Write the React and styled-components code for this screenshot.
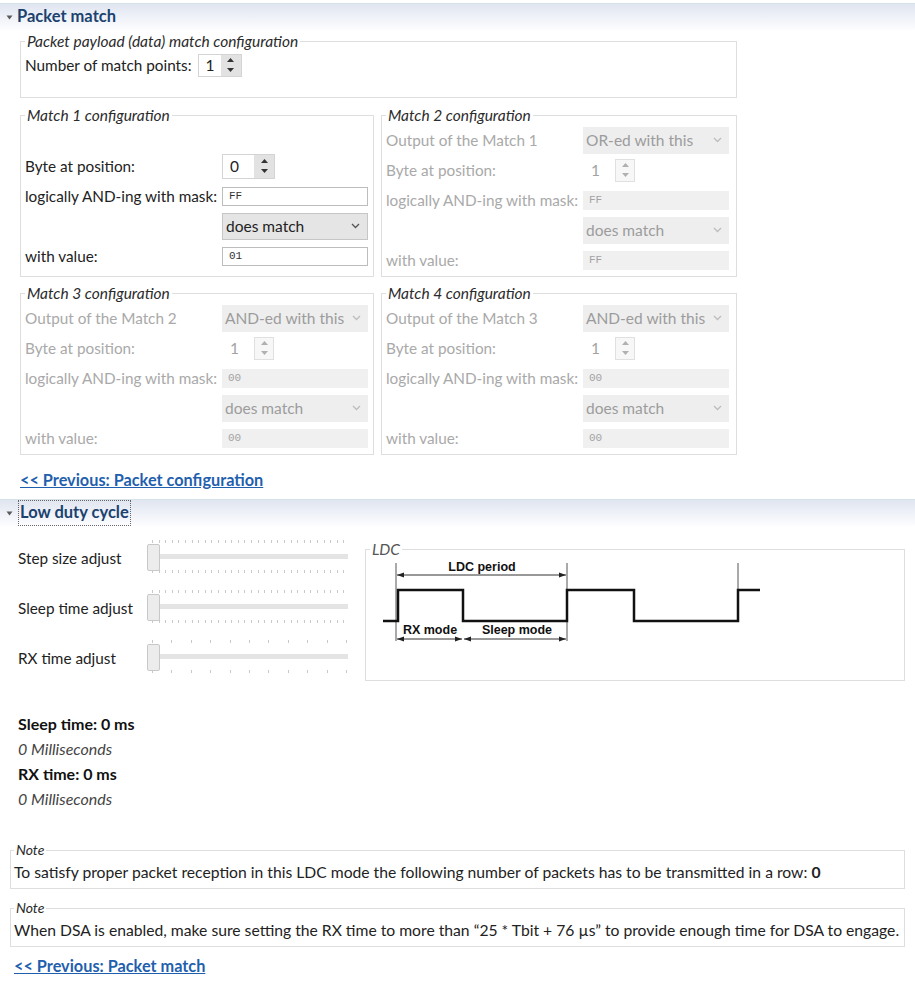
import React from "react";
import styled, { createGlobalStyle, css } from "styled-components";

const GlobalStyle = createGlobalStyle`
  body {
    margin: 0;
    background: #ffffff;
    font-family: Lato, "Open Sans", "DejaVu Sans", sans-serif;
    font-size: 15.3px;
    color: #222222;
  }
`;

const Page = styled.div`
  width: 915px;
  padding: 3px 0 20px;
`;

// collapsible section header
const Bar = styled.div`
  display: flex;
  align-items: center;
  gap: 3px;
  height: 26px;
  padding-left: 6px;
  border-top: 1px solid #d4e4ea;
  background: linear-gradient(to bottom, #e0e5f0 0%, #edf0f7 45%, #fdfdfe 100%);
`;

const BarTitle = styled.span`
  font-size: 16.5px;
  font-weight: 700;
  color: #1b426f;
  padding: 1px 1px 3px;
  outline: ${(p) => (p.$focused ? "1px dotted #666" : "none")};
  margin-left: ${(p) => (p.$focused ? 3 : 0)}px;
`;

const Caret = () => (
  <svg width="7" height="5" viewBox="0 0 7 5">
    <path d="M0.5 0.5h6L3.5 4.5z" fill="#5a5a5a" />
  </svg>
);

const SectionBar = ({ title, focused }) => (
  <Bar>
    <Caret />
    <BarTitle $focused={focused}>{title}</BarTitle>
  </Bar>
);

const PacketBody = styled.div`
  width: 717px;
  padding: 2px 0 0 20px;
`;

const Group = styled.fieldset`
  margin: 0;
  padding: ${(p) => p.$pad || "1px 4px 1px"};
  border: 1px solid #dedede;
  min-width: 0;
  box-sizing: border-box;
`;

const Legend = styled.legend`
  padding: 0 2px;
  font-style: italic;
  font-size: ${(p) => p.$size || 15.5}px;
  line-height: 18px;
  color: #2b2b2b;
`;

const InlineRow = styled.div`
  display: flex;
  align-items: center;
  gap: 6px;
  height: 26px;
`;

const MatchGrid = styled.div`
  display: grid;
  grid-template-columns: 354px 356px;
  column-gap: 7px;
  row-gap: 7px;
  margin-top: 8px;

  & > fieldset {
    width: 100%;
  }
`;

const FieldGrid = styled.div`
  display: grid;
  grid-template-columns: 197px 146px;
  grid-template-rows: ${(p) => p.$lead}px;
  grid-auto-rows: 30px;
  align-items: center;
`;

const Label = styled.span`
  white-space: nowrap;
  color: ${(p) => (p.$off ? "#a9a9a9" : "#222222")};
`;

const TextField = styled.div`
  display: flex;
  align-items: center;
  height: 19px;
  box-sizing: border-box;
  padding-left: 6px;
  font-family: "Liberation Mono", "DejaVu Sans Mono", monospace;
  font-size: 11px;
  ${(p) =>
    p.$off
      ? css`
          background: #f0f0f0;
          color: #a3a3a3;
        `
      : css`
          background: #ffffff;
          border: 1px solid #bdbdbd;
          color: #333333;
        `}
`;

const SelectBox = styled.div`
  display: flex;
  align-items: center;
  justify-content: space-between;
  height: 27px;
  box-sizing: border-box;
  padding: 0 7px 0 3px;
  font-size: 15.5px;
  white-space: nowrap;
  ${(p) =>
    p.$off
      ? css`
          background: #eeeeee;
          color: #9c9c9c;
        `
      : css`
          background: #e5e5e5;
          border: 1px solid #c6c6c6;
          color: #222222;
        `}
`;

const Chevron = ({ off }) => (
  <svg width="9" height="6" viewBox="0 0 9 6">
    <path
      d="M1 1l3.5 3.5L8 1"
      fill="none"
      stroke={off ? "#bdbdbd" : "#555"}
      strokeWidth="1.3"
    />
  </svg>
);

const Select = ({ value, off }) => (
  <SelectBox $off={off}>
    <span>{value}</span>
    <Chevron off={off} />
  </SelectBox>
);

const SpinBox = styled.div`
  display: flex;
  width: ${(p) => p.$w}px;
  height: ${(p) => p.$h}px;
  box-sizing: border-box;
  border: 1px solid ${(p) => (p.$off ? "transparent" : "#d4d4d4")};
  background: ${(p) => (p.$off ? "transparent" : "#ffffff")};
`;

const SpinValue = styled.span`
  flex: 1;
  display: flex;
  align-items: center;
  padding-left: 7px;
  font-size: 15.5px;
  color: ${(p) => (p.$off ? "#a3a3a3" : "#222222")};
`;

const SpinButtons = styled.div`
  display: flex;
  flex-direction: column;
  width: 20px;
  box-sizing: border-box;
  background: ${(p) => (p.$off ? "#f7f7f7" : "#e2e2e2")};
  border: 1px solid ${(p) => (p.$off ? "#e0e0e0" : "#e2e2e2")};
`;

const SpinHalf = styled.div`
  flex: 1;
  display: flex;
  align-items: center;
  justify-content: center;
`;

const Spinner = ({ value, off, w = 53, h = 25 }) => (
  <SpinBox $w={w} $h={h} $off={off}>
    <SpinValue $off={off}>{value}</SpinValue>
    <SpinButtons $off={off}>
      <SpinHalf>
        <svg width="7" height="4" viewBox="0 0 7 4">
          <path d="M0 4L3.5 0L7 4z" fill={off ? "#b0b0b0" : "#333"} />
        </svg>
      </SpinHalf>
      <SpinHalf>
        <svg width="7" height="4" viewBox="0 0 7 4">
          <path d="M0 0L3.5 4L7 0z" fill={off ? "#b0b0b0" : "#333"} />
        </svg>
      </SpinHalf>
    </SpinButtons>
  </SpinBox>
);

const NavLink = styled.a`
  display: block;
  width: max-content;
  font-size: 16.3px;
  line-height: 17px;
  font-weight: 700;
  color: #1f5fae;
  text-decoration: underline;
  margin: ${(p) => p.$margin};
`;

// low duty cycle section
const LdcBody = styled.div`
  display: flex;
  align-items: flex-start;
  padding: 7px 0 0 18px;
`;

const SliderColumn = styled.div`
  display: grid;
  grid-template-columns: 129px 201px;
  grid-auto-rows: 50px;
  align-items: center;
`;

const SliderBox = styled.div`
  position: relative;
  display: flex;
  flex-direction: column;
  width: 201px;
  height: 36px;
`;

const TickRow = styled.div`
  height: 3px;
  margin-left: 5px;
  width: 195px;
  background: repeating-linear-gradient(
    to right,
    #c9c9c9 0 1px,
    transparent 1px ${(p) => p.$step}px
  );
`;

const Track = styled.div`
  height: 5px;
  margin: 11px 0 11px 3px;
  background: #e4e4e4;
`;

const Thumb = styled.div`
  position: absolute;
  left: 0;
  top: 4px;
  width: 13px;
  height: 27px;
  box-sizing: border-box;
  background: #ececec;
  border: 1px solid #c8c8c8;
  border-radius: 2px;
`;

const Slider = ({ step }) => (
  <SliderBox>
    <TickRow $step={step} />
    <Track />
    <TickRow $step={step} />
    <Thumb />
  </SliderBox>
);

const LdcGroup = styled(Group)`
  width: 540px;
  height: 141px;
  margin: 7px 0 0 17px;
`;

const LegendGray = styled(Legend)`
  color: #555555;
`;

const DiagramText = styled.text`
  font-family: "Liberation Sans", Arial, sans-serif;
  font-weight: 700;
  font-size: 12.5px;
  fill: #111111;
  text-anchor: middle;
`;

const Arrow = ({ x1, x2, y }) => (
  <g>
    <line x1={x1} y1={y} x2={x2} y2={y} stroke="#333" strokeWidth="1" />
    <path d={`M${x1} ${y}l7 -2.6v5.2z`} fill="#222" />
    <path d={`M${x2} ${y}l-7 -2.6v5.2z`} fill="#222" />
  </g>
);

const LdcDiagram = () => (
  <svg width="532" height="118" viewBox="0 0 532 118">
    <g stroke="#555" strokeWidth="1">
      <line x1="26" y1="4" x2="26" y2="82" />
      <line x1="197" y1="4" x2="197" y2="82" />
      <line x1="368" y1="4" x2="368" y2="31" />
    </g>
    <Arrow x1={27} x2={196} y={16} />
    <Arrow x1={27} x2={92} y={80} />
    <Arrow x1={94} x2={196} y={80} />
    <polyline
      points="13,62 28,62 28,31 93,31 93,62 197,62 197,31 264,31 264,62 368,62 368,31 390,31"
      fill="none"
      stroke="#111"
      strokeWidth="2.5"
    />
    <DiagramText x="112" y="12">LDC period</DiagramText>
    <DiagramText x="60" y="75">RX mode</DiagramText>
    <DiagramText x="147" y="75">Sleep mode</DiagramText>
  </svg>
);

const Summary = styled.div`
  padding: 28px 0 0 18px;
  line-height: 25px;
  font-size: 16px;
`;

const Strong = styled.div`
  font-weight: 700;
  color: #111111;
`;

const Faint = styled.div`
  font-style: italic;
  color: #444444;
`;

const Notes = styled.div`
  display: flex;
  flex-direction: column;
  gap: 10px;
  width: 895px;
  margin: 30px 0 0 10px;
`;

const NoteText = styled.div`
  line-height: 22px;
  font-size: 15.7px;
  color: #222222;
  white-space: nowrap;

  b {
    font-weight: 700;
  }
`;

const matches = [
  { title: "Match 1 configuration", byte: "0", mask: "FF", value: "01" },
  {
    title: "Match 2 configuration",
    output: "Output of the Match 1",
    combine: "OR-ed with this",
    byte: "1",
    mask: "FF",
    value: "FF",
  },
  {
    title: "Match 3 configuration",
    output: "Output of the Match 2",
    combine: "AND-ed with this",
    byte: "1",
    mask: "00",
    value: "00",
  },
  {
    title: "Match 4 configuration",
    output: "Output of the Match 3",
    combine: "AND-ed with this",
    byte: "1",
    mask: "00",
    value: "00",
  },
];

const MatchBox = ({ title, output, combine, byte, mask, value }) => {
  const off = Boolean(output); // only the first match point is active
  return (
    <Group>
      <Legend>{title}</Legend>
      <FieldGrid $lead={off ? 30 : 26}>
        {off ? <Label $off>{output}</Label> : <span />}
        {off ? <Select value={combine} off /> : <span />}
        <Label $off={off}>Byte at position:</Label>
        <Spinner value={byte} off={off} />
        <Label $off={off}>logically AND-ing with mask:</Label>
        <TextField $off={off}>{mask}</TextField>
        <span />
        <Select value="does match" off={off} />
        <Label $off={off}>with value:</Label>
        <TextField $off={off}>{value}</TextField>
      </FieldGrid>
    </Group>
  );
};

const sliders = [
  { label: "Step size adjust", step: 6.6 },
  { label: "Sleep time adjust", step: 6.6 },
  { label: "RX time adjust", step: 19.4 },
];

export default function App() {
  return (
    <Page>
      <GlobalStyle />
      <SectionBar title="Packet match" />
      <PacketBody>
        <Group $pad="2px 4px 19px">
          <Legend>Packet payload (data) match configuration</Legend>
          <InlineRow>
            <span>Number of match points:</span>
            <Spinner value="1" w={44} h={23} />
          </InlineRow>
        </Group>
        <MatchGrid>
          {matches.map((m) => (
            <MatchBox key={m.title} {...m} />
          ))}
        </MatchGrid>
        <NavLink $margin="16px 0 0 0">&lt;&lt; Previous: Packet configuration</NavLink>
      </PacketBody>

      <div style={{ height: 11 }} />
      <SectionBar title="Low duty cycle" focused />
      <LdcBody>
        <SliderColumn>
          {sliders.map((s) => (
            <React.Fragment key={s.label}>
              <Label>{s.label}</Label>
              <Slider step={s.step} />
            </React.Fragment>
          ))}
        </SliderColumn>
        <LdcGroup>
          <LegendGray>LDC</LegendGray>
          <LdcDiagram />
        </LdcGroup>
      </LdcBody>

      <Summary>
        <Strong>Sleep time: 0 ms</Strong>
        <Faint>0 Milliseconds</Faint>
        <Strong>RX time: 0 ms</Strong>
        <Faint>0 Milliseconds</Faint>
      </Summary>

      <Notes>
        <Group $pad="2px 3px 5px">
          <Legend $size={14}>Note</Legend>
          <NoteText>
            To satisfy proper packet reception in this LDC mode the following number of packets
            has to be transmitted in a row: <b>0</b>
          </NoteText>
        </Group>
        <Group $pad="2px 3px 5px">
          <Legend $size={14}>Note</Legend>
          <NoteText>
            When DSA is enabled, make sure setting the RX time to more than “25 * Tbit + 76 µs” to
            provide enough time for DSA to engage.
          </NoteText>
        </Group>
      </Notes>
      <NavLink $margin="10px 0 0 14px">&lt;&lt; Previous: Packet match</NavLink>
    </Page>
  );
}
